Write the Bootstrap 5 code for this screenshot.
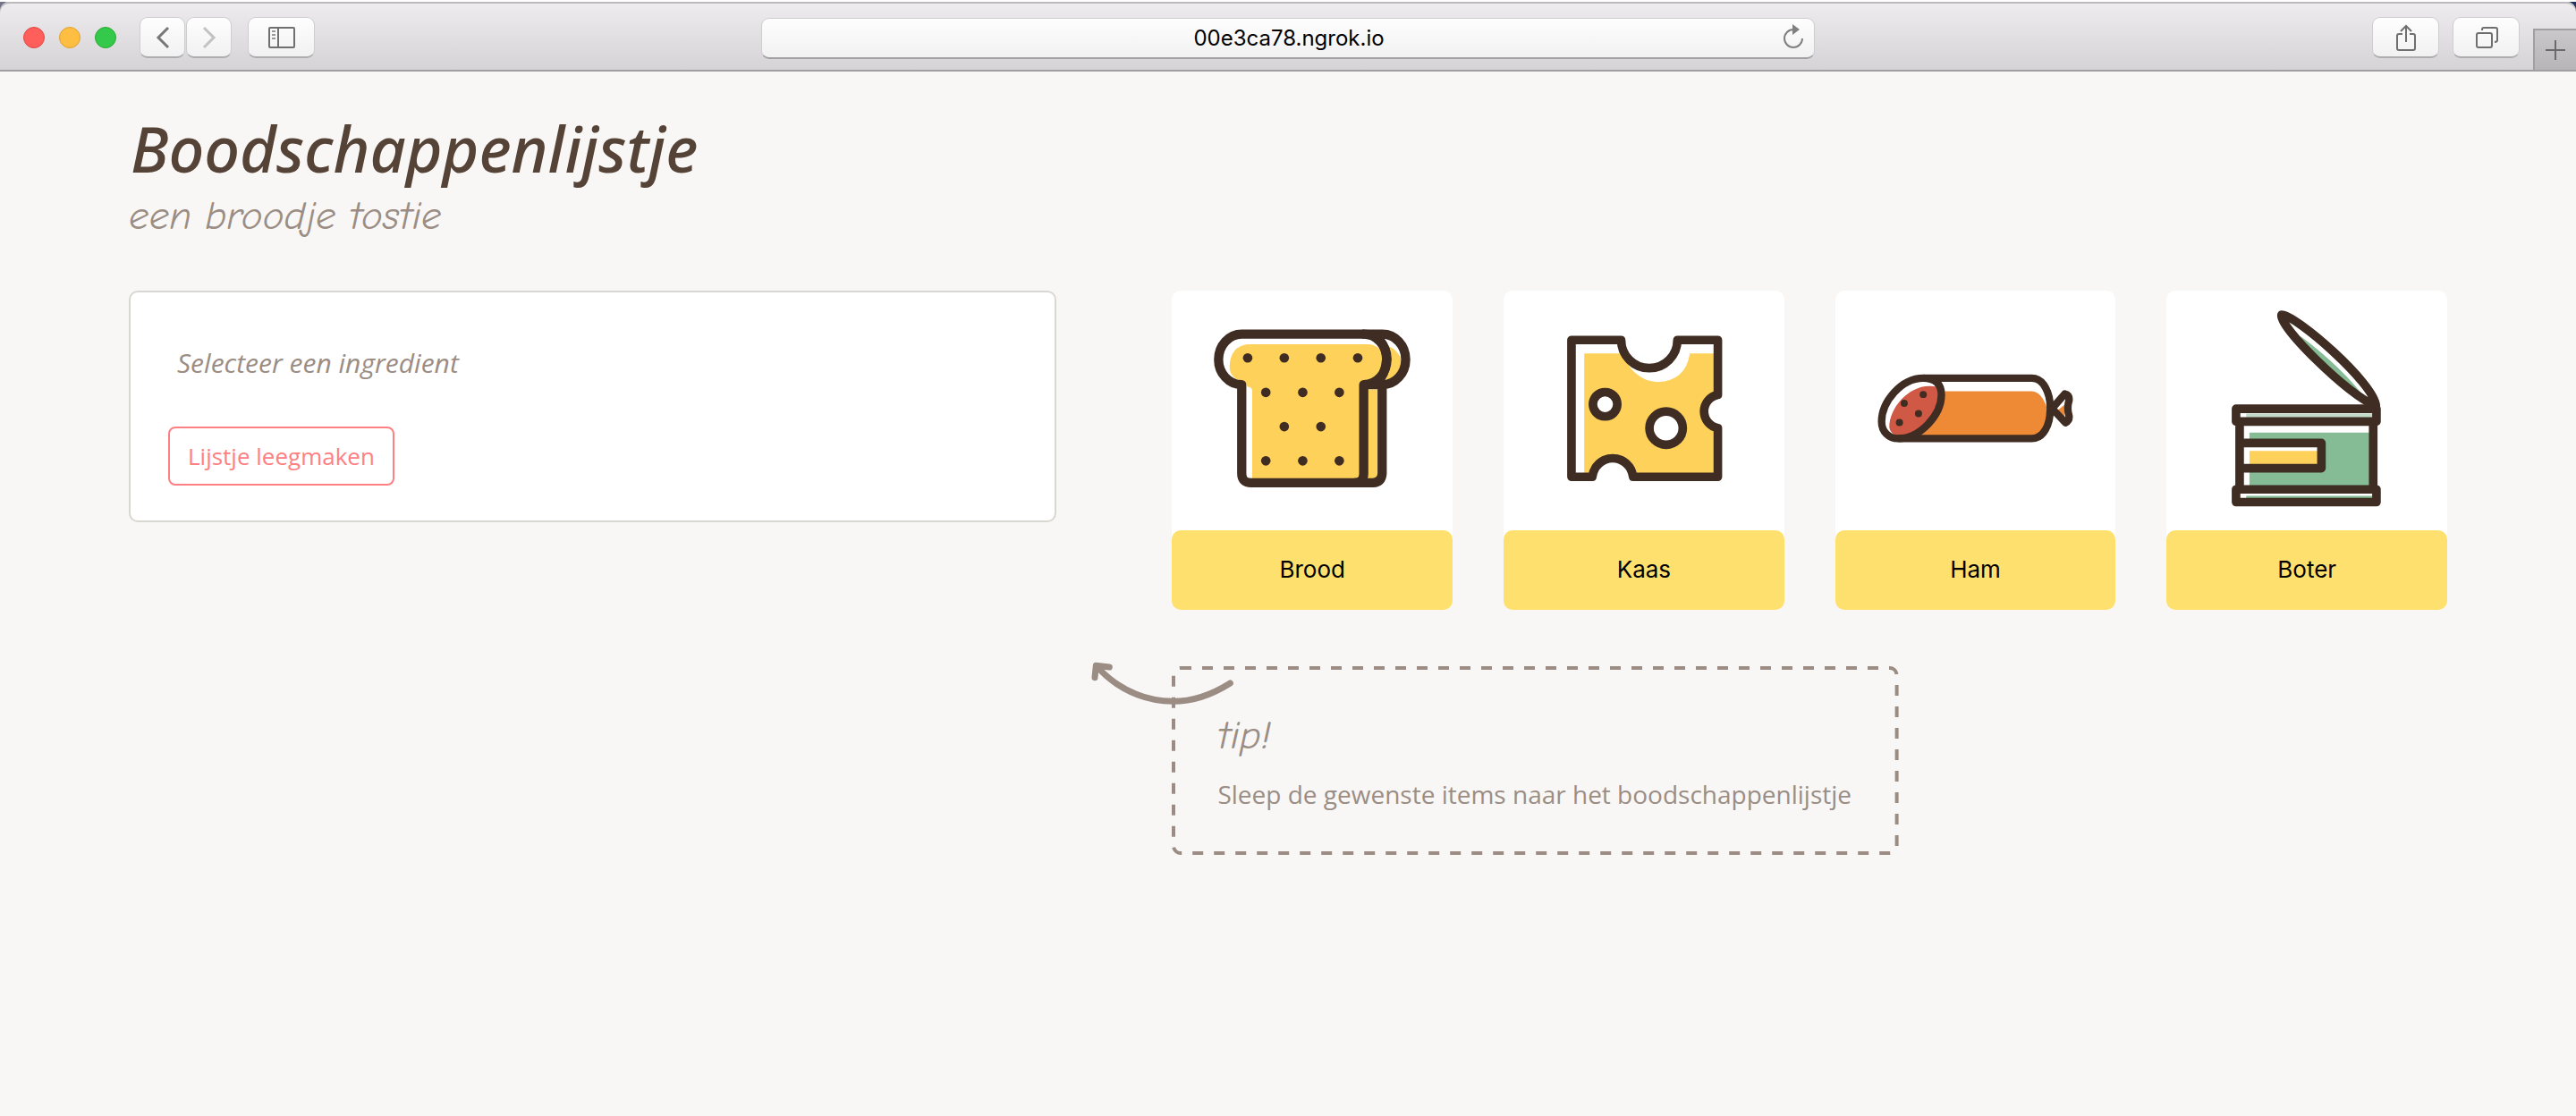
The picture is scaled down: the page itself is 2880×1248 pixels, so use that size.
<!DOCTYPE html>
<html lang="nl">
<head>
<meta charset="utf-8">
<meta name="viewport" content="width=device-width, initial-scale=1">
<title>Boodschappenlijstje</title>
<link href="https://cdn.jsdelivr.net/npm/bootstrap@5.3.0/dist/css/bootstrap.min.css" rel="stylesheet">
<style>
  body { background: #f8f7f5; font-family: "Open Sans", sans-serif; font-size: 28px; color: #9b8d84; }
  svg { display: block; }

  /* browser toolbar */
  .desktop { background: linear-gradient(90deg, #6f7288, #20305f); border-top: 2px solid #fff; }
  .toolbar { height: 78px; padding-top: 4px; background: linear-gradient(#eeecef, #d5d3d6); border-bottom: 2px solid #a19fa3; box-shadow: inset 0 2px #bbb9bb; border-radius: 10px 10px 0 0; overflow: hidden; }
  .side { flex: 1 1 0; }
  .lights { gap: 16px; margin: 0 26px; }
  .light { width: 24px; height: 24px; border-radius: 50%; border: 1px solid; }
  .light-red { background: #fe5f5a; border-color: #e2463f; }
  .light-amber { background: #febe41; border-color: #e0a033; }
  .light-green { background: #35c94b; border-color: #27aa35; }
  .tool { height: 46px; border: 1px solid #cfcdd0; border-bottom: 2px solid #aeacaf; border-radius: 9px; background: linear-gradient(#fefefe, #f1f1f1); padding: 0; display: flex; align-items: center; justify-content: center; }
  .tool-nav { width: 51px; }
  .tool-wide { width: 75px; }
  .history { gap: 1px; margin-right: 18px; }
  .right-tools { gap: 15px; }
  .address { position: relative; width: calc(40% + 26px); height: 46px; }
  .address input { width: 100%; height: 46px; padding: 0 46px 0 48px; text-align: center; font-family: Inter, sans-serif; font-size: 24px; color: #000; border: 1px solid #cfcdd0; border-bottom: 2px solid #a3a1a4; border-radius: 9px; background: linear-gradient(#fefefe, #f1f1f1); }
  .reload { position: absolute; right: 10px; top: 8px; border: 0; padding: 0; background: none; }
  .newtab { width: 48px; height: 46px; border: 2px solid #a19fa3; border-right: 0; border-bottom: 0; background: linear-gradient(#c9c7ca, #b7b5b8); padding: 0; }

  /* page */
  .page { padding: 54px 5% 0; }
  h1 { font-family: "Noto Sans", "Open Sans", sans-serif; font-size: 70px; line-height: 64px; font-weight: 500; font-style: italic; color: #564337; margin: 0; padding-left: 2px; }
  .script { font-family: "Comic Neue", "Segoe Script", cursive, "Open Sans", sans-serif; font-style: italic; font-size: 45px; line-height: 68px; font-weight: 400; margin: 0; }
  .subtitle { padding-top: 9px; }
  .columns { margin-top: 50px; }
  .basket { width: 40%; background: #fff; border: 2px solid #d8d7d1; border-radius: 10px; padding: 57px 42px 39px; }
  .basket p { font-style: italic; font-size: 30px; line-height: 44px; margin: 0 0 49px; padding-left: 10px; }
  .btn-clear { font-size: 26px; line-height: 38px; padding: 12px 20px; color: #fd8083; border: 2px solid #fd8083; border-radius: 8px; background: #fff; }
  .shop { width: 55%; }
  .item { width: 22%; background: #fff; border-radius: 10px; cursor: grab; }
  .item svg { width: 70%; margin: 22px auto 26px; }
  .item-name { background: #fee06e; border-radius: 10px; color: #000; font-family: Inter, sans-serif; font-size: 26px; line-height: 39px; padding: 24px 0 26px; text-align: center; }
  .tip { position: relative; width: fit-content; margin-top: 63px; padding: 43px 53px 40px 51px; }
  .tip-text { line-height: 56px; padding-top: 4px; margin: 0; }
  .tip-frame { position: absolute; inset: 0; width: 100%; height: 100%; }
  .tip-frame rect { width: calc(100% - 4px); height: calc(100% - 4px); fill: none; stroke: #9b8d84; stroke-width: 4; stroke-dasharray: 12 12; }
  .tip-arrow { position: absolute; left: -90px; top: -5px; }
</style>
<script src="https://cdn.jsdelivr.net/npm/bootstrap@5.3.0/dist/js/bootstrap.bundle.min.js"></script>
</head>
<body>
<div class="desktop">
<header class="toolbar d-flex align-items-center">
  <div class="side d-flex align-items-center">
    <div class="lights d-flex">
      <span class="light light-red"></span><span class="light light-amber"></span><span class="light light-green"></span>
    </div>
    <div class="history d-flex">
      <button class="tool tool-nav" type="button" aria-label="Vorige">
        <svg width="18" height="26" fill="none" stroke="#777" stroke-width="3"><path d="M15 2 4 13l11 11"/></svg>
      </button>
      <button class="tool tool-nav" type="button" aria-label="Volgende">
        <svg width="18" height="26" fill="none" stroke="#c2c2c2" stroke-width="3"><path d="M3 2l11 11L3 24"/></svg>
      </button>
    </div>
    <button class="tool tool-wide" type="button" aria-label="Zijbalk">
      <svg width="30" height="24" fill="none" stroke="#6f6f6f" stroke-width="2"><rect x="1" y="1" width="28" height="22" rx="1"/><path d="M11 1v22"/><path d="M4 5h4M4 9h4M4 13h4" stroke="#999"/></svg>
    </button>
  </div>
  <div class="address">
    <input type="text" value="00e3ca78.ngrok.io" aria-label="Adres">
    <button class="reload" type="button" aria-label="Herlaad">
      <svg width="28" height="28" fill="none" stroke="#808080" stroke-width="2"><path d="M14 6a10 10 0 1 0 10 10"/><path d="M13 0v12l8-6z" fill="#808080" stroke="none"/></svg>
    </button>
  </div>
  <div class="side right-tools d-flex align-items-center align-self-stretch justify-content-end">
    <button class="tool tool-wide" type="button" aria-label="Deel">
      <svg width="24" height="32" fill="none" stroke="#6f6f6f" stroke-width="2"><path d="M8 12H4q-2 0-2 2v14q0 2 2 2h16q2 0 2-2V14q0-2-2-2h-4M12 21V3M6 9l6-6 6 6"/></svg>
    </button>
    <button class="tool tool-wide" type="button" aria-label="Tabbladen">
      <svg width="26" height="26" fill="none" stroke="#6f6f6f" stroke-width="2"><rect x="2" y="8" width="17" height="16" rx="2"/><path d="M8 5V4q0-2 2-2h13q2 0 2 2v12q0 2-3 2"/></svg>
    </button>
    <button class="newtab align-self-end" type="button" aria-label="Nieuw tabblad">
      <svg class="mx-auto" width="24" height="24" stroke="#6b696c" stroke-width="2"><path d="M12 1v22M1 12h22"/></svg>
    </button>
  </div>
</header>
</div>

<main class="page">
  <h1>Boodschappenlijstje</h1>
  <p class="script subtitle">een broodje tostie</p>

  <div class="columns d-flex justify-content-between align-items-start">
    <section class="basket">
      <p>Selecteer een ingredient</p>
      <button class="btn btn-clear" type="button">Lijstje leegmaken</button>
    </section>

    <section class="shop">
      <div class="d-flex justify-content-between">
        <div class="item" draggable="true">
          <svg viewBox="171 111 660 660" fill="none" stroke="#3f2c22" stroke-width="31" stroke-linejoin="round">
            <g fill="#fdd15a" stroke="none">
              <path d="M284 225H695Q745 235 750 280Q745 340 675 361V685H300V380Q298 368 284 368Q282 355 265 348Q224 340 224 298Q228 232 284 225Z"/>
              <path d="M758 231Q792 245 802 280Q800 335 745 350Q770 300 758 231ZM688 377H722V676H685Z"/>
            </g>
            <path d="M265 361A78 85 0 0 1 265 191H673A79 85 0 0 1 675 361V660Q675 691 643 691H297Q265 691 265 660Z"/>
            <path d="M670 191H738A78 85 0 0 1 738 361H675M737 361V660Q735 689 706 691H643"/>
            <path d="M700 191Q750 215 752 276Q748 330 715 361"/>
            <g fill="#3f2c22" stroke="none"><circle cx="285" cy="271" r="16"/><circle cx="408" cy="271" r="16"/><circle cx="531" cy="271" r="16"/><circle cx="655" cy="271" r="16"/><circle cx="346" cy="387" r="16"/><circle cx="470" cy="387" r="16"/><circle cx="593" cy="387" r="16"/><circle cx="408" cy="502" r="16"/><circle cx="531" cy="502" r="16"/><circle cx="346" cy="617" r="16"/><circle cx="470" cy="617" r="16"/><circle cx="593" cy="617" r="16"/></g>
          </svg>
          <div class="item-name">Brood</div>
        </div>
        <div class="item" draggable="true">
          <svg viewBox="174 111 660 660" fill="none" stroke="#3f2c22" stroke-width="29" stroke-linejoin="round">
            <path fill="#fdd15a" stroke="none" d="M304 256H430L460 306Q500 352 551 352Q645 348 659 256H745V395A57 57 0 0 0 745 507V665H468A69 71 0 0 0 331 665H304Z"/>
            <path d="M261 211H428A94 94 0 0 0 617 211H753V395A57 57 0 0 0 753 507V671H468A69 71 0 0 0 331 671H261Z"/>
            <circle cx="374" cy="427" r="41" fill="#fff"/><circle cx="579" cy="507" r="56" fill="#fff"/>
          </svg>
          <div class="item-name">Kaas</div>
        </div>
        <div class="item" draggable="true">
          <svg viewBox="176 111 660 660" fill="none" stroke="#3f2c22" stroke-width="25" stroke-linejoin="round">
            <path fill="#ee8936" stroke="none" d="M390 383H695C722 383 744 420 748 455C744 500 722 535 695 535H300Z"/>
            <path fill="#fff" stroke="none" d="M330 339C255 339 190 420 190 485C190 520 215 542 245 542C320 542 391 462 391 395C391 360 372 339 330 339Z"/>
            <path fill="#cf5945" stroke="none" d="M350 366C280 366 215 440 216 505Q218 525 245 535C320 540 391 462 386 372Q370 365 350 366Z"/>
            <path d="M330 339H695C735 339 757 390 757 441C757 495 735 542 695 542H245"/>
            <path d="M330 339C255 339 190 420 190 485C190 520 215 542 245 542C320 542 391 462 391 395C391 360 372 339 330 339Z"/>
            <path fill="#ee8936" stroke="none" d="M783 446L805 428V475Z"/>
            <path d="M763 441L806 392Q822 396 820 414Q812 440 820 466Q822 482 808 489Z"/>
            <g fill="#3f2c22" stroke="none"><circle cx="330" cy="394" r="12"/><circle cx="266" cy="424" r="12"/><circle cx="314" cy="458" r="12"/><circle cx="250" cy="488" r="12"/></g>
          </svg>
          <div class="item-name">Ham</div>
        </div>
        <div class="item" draggable="true">
          <svg viewBox="178 111 660 660" fill="none" stroke="#3f2c22" stroke-width="29" stroke-linejoin="round">
            <path fill="#86bc95" stroke="none" d="M316 522H720V700H316ZM488 198Q625 300 716 419Q560 350 488 198ZM305 735H730V745H305Z"/>
            <path fill="#c3dcc9" stroke="none" d="M305 458H730V472H305Z"/>
            <path fill="#fff" stroke="none" d="M296 570H545V630H296Z"/>
            <path fill="#fdd15a" stroke="none" d="M316 584H545V630H316Z"/>
            <path d="M424 126C470 125 735 355 741 432C650 400 410 160 424 126Z"/>
            <path d="M271 442H743V485H271ZM271 713H743V756H271ZM283 485V713M732 485V713M283 557H558V642H283"/>
          </svg>
          <div class="item-name">Boter</div>
        </div>
      </div>

      <aside class="tip">
        <svg class="tip-frame"><rect x="2" y="2" rx="8"/></svg>
        <svg class="tip-arrow" width="160" height="50" viewBox="60 60 480 150" fill="none" stroke="#9b8d84" stroke-width="21" stroke-linecap="round" stroke-linejoin="round">
          <path d="M526 132Q430 193 335 193Q190 190 88 86"/><path d="M121 78L76 73L72 113"/>
        </svg>
        <p class="script">tip!</p>
        <p class="tip-text">Sleep de gewenste items naar het boodschappenlijstje</p>
      </aside>
    </section>
  </div>
</main>
</body>
</html>
